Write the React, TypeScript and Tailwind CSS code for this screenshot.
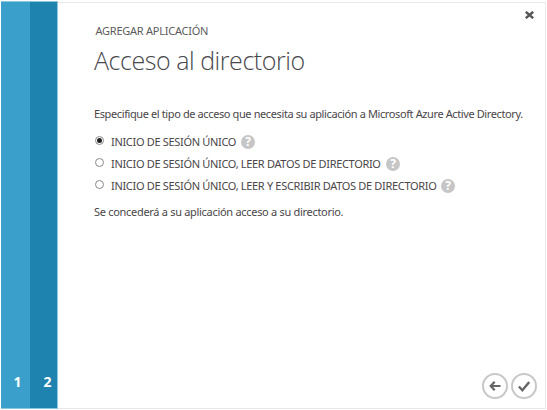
import React from "react";

function Help() {
  return (
    <span className="flex h-[14px] w-[14px] shrink-0 items-center justify-center rounded-full bg-[#c6c6c6] font-['Noto_Sans',sans-serif] text-[12px] font-bold leading-none tracking-normal text-white">
      ?
    </span>
  );
}

function Radio({ checked }: { checked?: boolean }) {
  return (
    <span className="mb-[3px] flex h-[9px] w-[9px] shrink-0 items-center justify-center rounded-full border border-[#8a8a8a] bg-white">
      {checked && <span className="h-[5px] w-[5px] rounded-full bg-[#222]" />}
    </span>
  );
}

function Option({ label, width, checked }: { label: string; width: string; checked?: boolean }) {
  return (
    <label className="flex h-[22px] items-center">
      <Radio checked={checked} />
      <span className={`ml-[7px] shrink-0 whitespace-nowrap ${width}`}>{label}</span>
      <Help />
    </label>
  );
}

export default function App() {
  return (
    <div className="flex h-[410px] w-[547px] overflow-hidden bg-white pl-px pt-px font-['Noto_Sans',sans-serif] text-[#4a4648]">
      <aside className="flex h-[408px] w-[57px] shrink-0 border border-l-0 border-[#8fc6df] bg-[#1f83b0] text-[14px] font-bold leading-[18px] text-white">
        <div className="flex w-[29px] items-end justify-center bg-[#3a9fca] pb-[17px] pl-[4px]">1</div>
        <div className="flex w-[27px] items-end justify-center pb-[17px] pl-[8px]">2</div>
      </aside>
      <main className="mt-px flex h-[407px] w-[488px] flex-col border border-l-0 border-[#e8e8e8] pl-[36px]">
        <div className="flex h-[28px] justify-end pr-[11px] pt-[8px]">
          <svg width="9" height="8" viewBox="0 0 9 8" className="shrink-0" stroke="#555" strokeWidth="2.4">
            <path d="M.8.8l7.4 6.4M8.2.8L.8 7.2" />
          </svg>
        </div>
        <div className="-mt-[8px] ml-[1.5px] h-[16px] whitespace-nowrap text-[11px] leading-[16px] tracking-[-0.25px] text-[#5c5c5c]">AGREGAR APLICACIÓN</div>
        <h1 className="mt-[3px] h-[36px] whitespace-nowrap font-['Open_Sans',sans-serif] text-[25px] font-light leading-[36px] tracking-[-0.45px] text-[#48484c]">Acceso al directorio</h1>
        <p className="mt-[27px] h-[18px] whitespace-nowrap text-[11px] leading-[18px] tracking-[-0.39px]">Especifique el tipo de acceso que necesita su aplicación a Microsoft Azure Active Directory.</p>
        <div className="mt-[8px] flex flex-col pl-px text-[11px] leading-[22px] tracking-[-0.32px]">
          <Option label="INICIO DE SESIÓN ÚNICO" width="w-[130px]" checked />
          <Option label="INICIO DE SESIÓN ÚNICO, LEER DATOS DE DIRECTORIO" width="w-[275px]" />
          <Option label="INICIO DE SESIÓN ÚNICO, LEER Y ESCRIBIR DATOS DE DIRECTORIO" width="w-[330px]" />
        </div>
        <p className="mt-[6px] h-[18px] whitespace-nowrap text-[11px] leading-[18px] tracking-[-0.3px]">Se concederá a su aplicación acceso a su directorio.</p>
        <footer className="mb-[9px] mr-[8px] mt-auto flex justify-end gap-[3px]">
          <button className="flex h-[26px] w-[26px] items-center justify-center rounded-full border-2 border-[#c8c8c8]">
            <svg width="12" height="10" viewBox="0 0 12 10" fill="none" stroke="#666" strokeWidth="2.2">
              <path d="M5.7 .8L1.7 5l4 4.2M2 5h9.5" />
            </svg>
          </button>
          <button className="flex h-[26px] w-[26px] items-center justify-center rounded-full border-2 border-[#c8c8c8]">
            <svg width="12" height="11" viewBox="0 0 12 11" fill="none" stroke="#666" strokeWidth="2.4">
              <path d="M.9 5.5L4.4 9.2 11.2 1" />
            </svg>
          </button>
        </footer>
      </main>
    </div>
  );
}
